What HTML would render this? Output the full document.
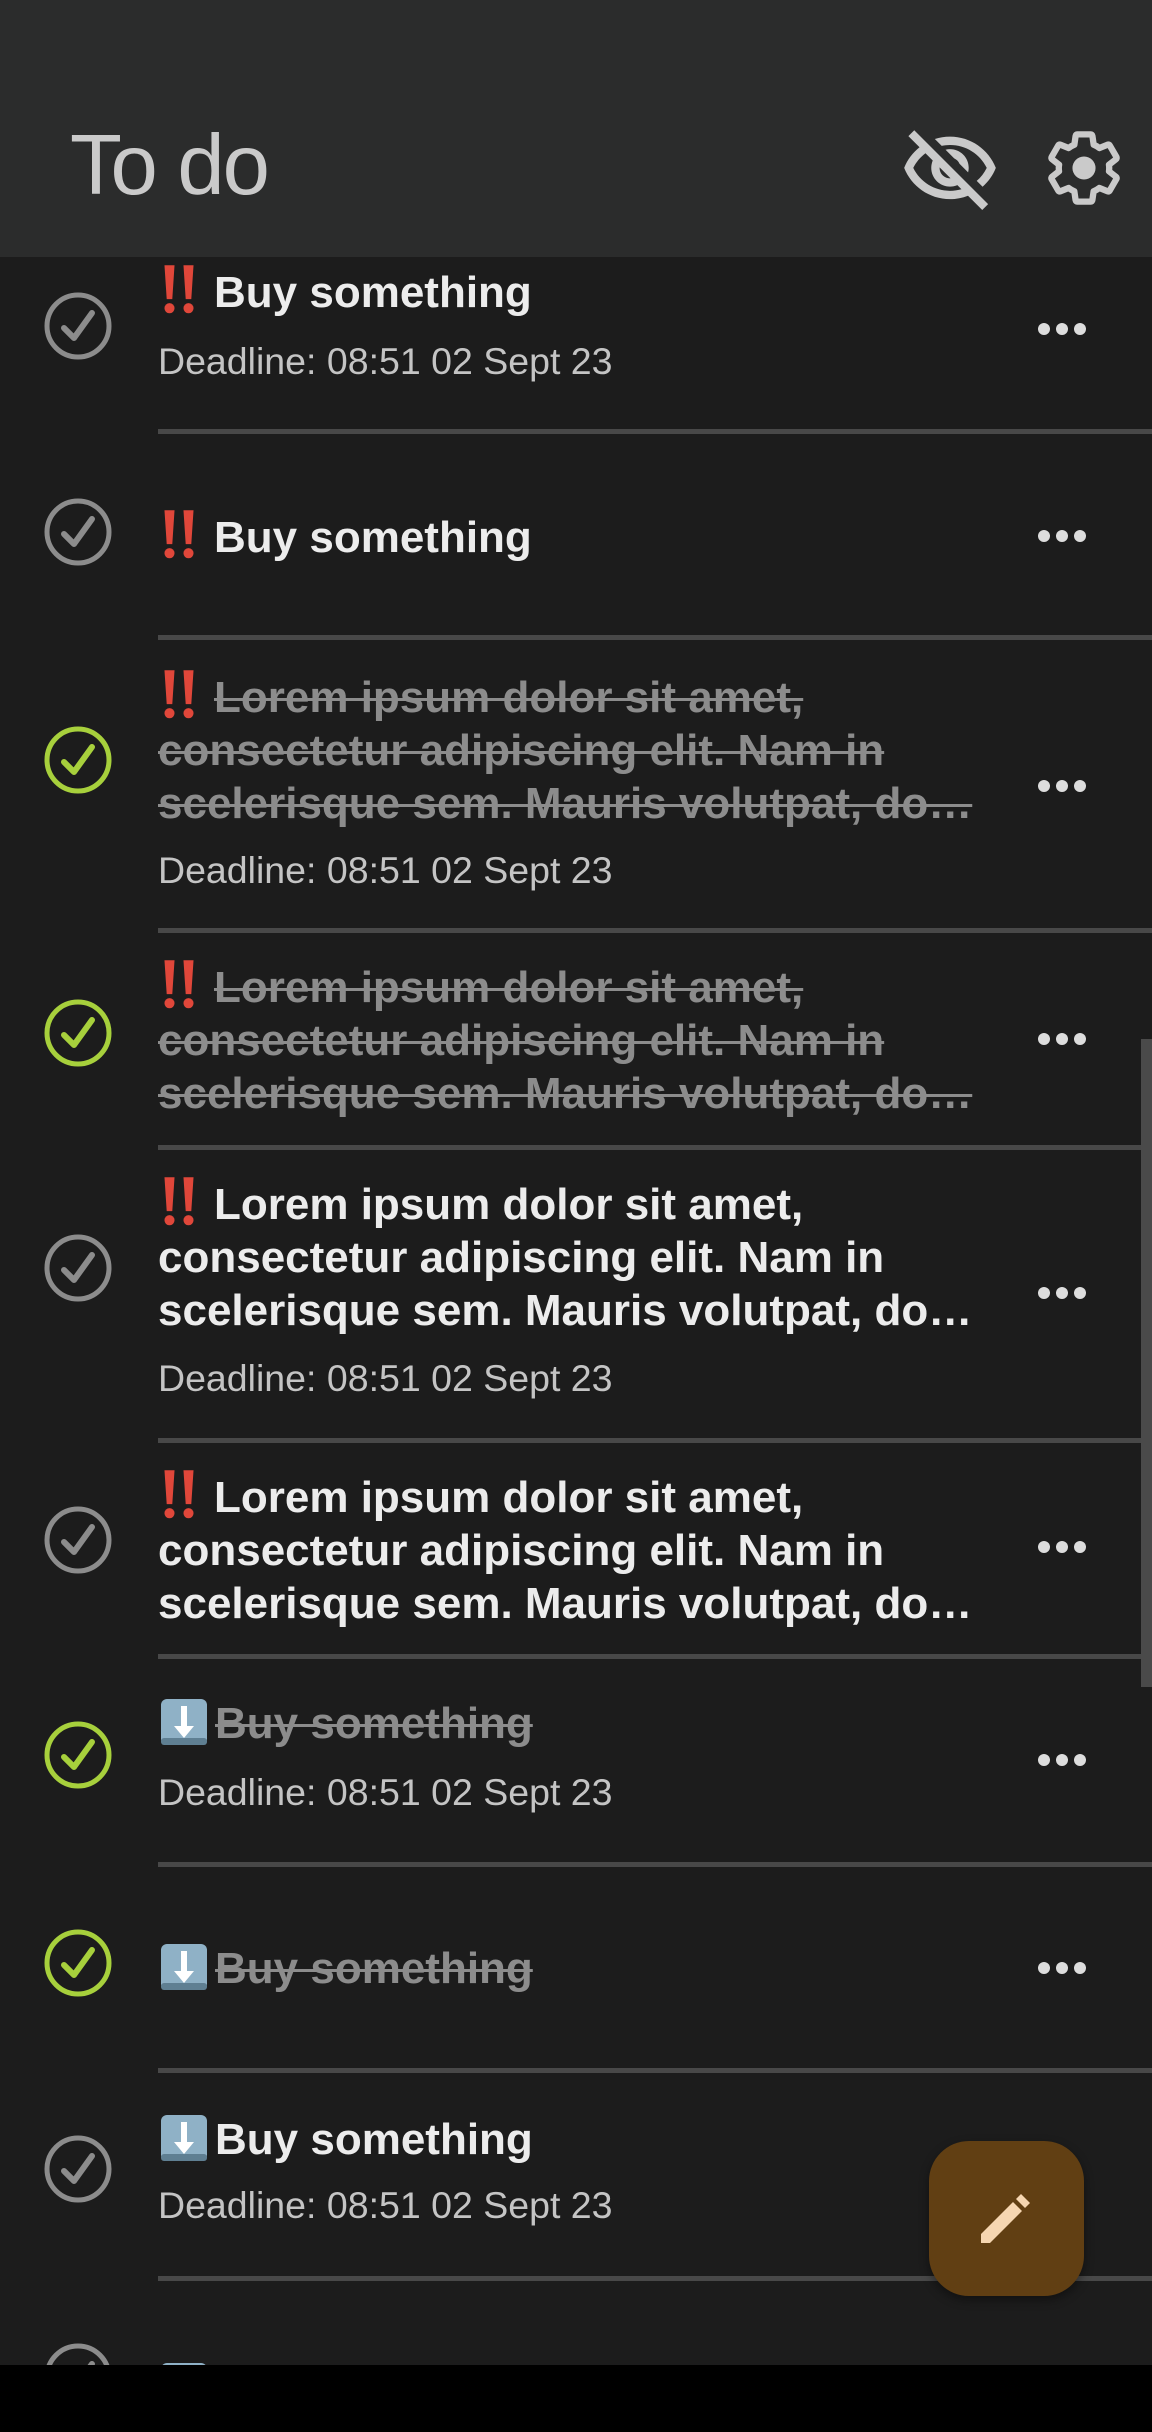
<!DOCTYPE html>
<html><head><meta charset="utf-8"><style>
*{margin:0;padding:0;box-sizing:border-box}
body{width:1152px;height:2432px;background:#1c1c1c;position:relative;overflow:hidden;font-family:"Liberation Sans",sans-serif}
.hdr{position:absolute;left:0;top:0;width:1152px;height:257px;background:#2b2c2c}
.title{position:absolute;left:70px;top:118px;font-size:85px;color:#cacaca;letter-spacing:-2px;line-height:96px}
.t{position:absolute;left:158px;font-size:44px;font-weight:bold;color:#ececec;line-height:53px;white-space:nowrap}
.s{color:#8c8c8c;text-decoration:line-through;text-decoration-thickness:3px}
.d{position:absolute;left:158px;font-size:37.5px;color:#c4c4c4;line-height:40px;white-space:nowrap}
.sep{position:absolute;left:158px;right:0;height:5px;background:#484848}
.chk{position:absolute;left:43px;width:70px;height:70px}
.dots{position:absolute;left:1036px;width:52px;height:14px}
.em{display:inline-block;vertical-align:2px;margin:-10px 16px -10px 2px}
.dn{display:inline-block;vertical-align:-8px;margin-right:7px;margin-left:2px}
</style></head><body>
<div class="hdr"></div>
<div class="title">To do</div>
<svg style="position:absolute;left:900px;top:120px" width="100" height="100" viewBox="0 0 24 24"><path fill="#cacaca" d="M12 6c3.79 0 7.17 2.13 8.82 5.5-.59 1.22-1.42 2.27-2.41 3.12l1.410 1.41c1.39-1.23 2.49-2.77 3.18-4.53C21.27 7.11 17 4 12 4c-1.270 0-2.49.2-3.64.57l1.65 1.65C10.66 6.09 11.32 6 12 6zm-1.07 1.14L13 9.21c.57.25 1.03.71 1.28 1.28l2.07 2.07c.08-.34.14-.7.14-1.07C16.5 9.01 14.48 7 12 7c-.37 0-.72.05-1.07.14zM2.01 3.87l2.68 2.68C3.06 7.830 1.78 9.52 1 11.5 2.73 15.89 7 19 12 19c1.52 0 2.98-.29 4.32-.82l3.42 3.42 1.41-1.41L3.42 2.45 2.01 3.87zm7.5 7.5l2.61 2.61c-.04.01-.08.02-.12.02-1.38 0-2.5-1.12-2.5-2.5 0-.05.01-.08.01-.13zm-3.4-3.4l1.75 1.75c-.23.55-.36 1.15-.36 1.78 0 2.48 2.02 4.5 4.5 4.5.63 0 1.23-.13 1.77-.36l.98.98c-.88.24-1.8.38-2.75.38-3.790 0-7.17-2.13-8.82-5.5.7-1.43 1.72-2.61 2.93-3.53z"/></svg>
<svg style="position:absolute;left:1042px;top:126px" width="84" height="84" viewBox="0 0 24 24"><path fill="none" stroke="#cacaca" stroke-width="1.8" stroke-linejoin="round" d="M19.14 12.94c.04-.3.06-.61.06-.94 0-.32-.02-.64-.07-.94l2.03-1.58c.18-.14.23-.41.12-.61l-1.92-3.32c-.12-.22-.37-.29-.59-.22l-2.39.96c-.5-.38-1.030-.7-1.62-.94l-.36-2.54c-.04-.24-.24-.41-.48-.41h-3.84c-.24 0-.43.17-.47.41l-.36 2.54c-.59.24-1.13.57-1.62.94l-2.39-.96c-.22-.08-.47 0-.59.22L2.74 8.87c-.12.21-.08.47.12.61l2.03 1.58c-.05.3-.09.63-.09.94s.02.64.07.94l-2.03 1.58c-.18.14-.23.41-.12.61l1.92 3.32c.12.22.37.29.59.22l2.39-.96c.5.38 1.03.7 1.62.94l.36 2.54c.05.24.24.41.48.41h3.84c.24 0 .44-.17.47-.41l.36-2.540c.59-.24 1.13-.56 1.62-.94l2.39.96c.22.08.47 0 .59-.22l1.920-3.32c.12-.22.07-.47-.12-.61l-2.01-1.58z"/><circle cx="12" cy="12" r="3.3" fill="#cacaca"/></svg>

<svg width="0" height="0" style="position:absolute"><defs>
<g id="cg"><circle cx="35" cy="35" r="31" fill="none" stroke="#8c8c8c" stroke-width="5"/><path d="M21 37 L31 47 L49 22" fill="none" stroke="#8c8c8c" stroke-width="6" stroke-linecap="round" stroke-linejoin="round"/></g>
<g id="cgr"><circle cx="35" cy="35" r="31" fill="none" stroke="#a7d03c" stroke-width="5"/><path d="M21 37 L31 47 L49 22" fill="none" stroke="#a7d03c" stroke-width="6" stroke-linecap="round" stroke-linejoin="round"/></g>
<g id="dt"><circle cx="8" cy="7" r="6" fill="#dddddd"/><circle cx="26" cy="7" r="6" fill="#dddddd"/><circle cx="44" cy="7" r="6" fill="#dddddd"/></g>
<g id="bang"><path d="M4 2 h9 l-2 30 h-5z M21 2 h9 l-2 30 h-5z" fill="#e0473a"/><circle cx="8.5" cy="40" r="4.5" fill="#e0473a"/><circle cx="25.5" cy="40" r="4.5" fill="#e0473a"/></g>
<g id="down"><rect x="1" y="1" width="46" height="46" rx="6" fill="#8fb1c6"/><rect x="1" y="40" width="46" height="7" rx="3" fill="#5f7f92"/><path d="M21 8 h6 v20 h7 l-10 12 -10 -12 h7z" fill="#fff"/></g>
</defs></svg>

<!-- Row1 -->
<svg class="chk" style="top:291px" viewBox="0 0 70 70"><use href="#cg"/></svg>
<div class="t" style="top:266px"><svg class="em" width="38" height="52" viewBox="0 0 34 46" preserveAspectRatio="none"><use href="#bang"/></svg>Buy something</div>
<div class="d" style="top:341px">Deadline: 08:51 02 Sept 23</div>
<svg class="dots" style="top:322px"><use href="#dt"/></svg>
<div class="sep" style="top:429px"></div>

<!-- Row2 -->
<svg class="chk" style="top:497px" viewBox="0 0 70 70"><use href="#cg"/></svg>
<div class="t" style="top:511px"><svg class="em" width="38" height="52" viewBox="0 0 34 46" preserveAspectRatio="none"><use href="#bang"/></svg>Buy something</div>
<svg class="dots" style="top:529px"><use href="#dt"/></svg>
<div class="sep" style="top:635px"></div>

<!-- Row3 -->
<svg class="chk" style="top:725px" viewBox="0 0 70 70"><use href="#cgr"/></svg>
<div class="t" style="top:671px"><svg class="em" width="38" height="52" viewBox="0 0 34 46" preserveAspectRatio="none"><use href="#bang"/></svg><span class="s">Lorem ipsum dolor sit amet,</span></div>
<div class="t s" style="top:724px">consectetur adipiscing elit. Nam in</div>
<div class="t s" style="top:777px">scelerisque sem. Mauris volutpat, do…</div>
<div class="d" style="top:850px">Deadline: 08:51 02 Sept 23</div>
<svg class="dots" style="top:779px"><use href="#dt"/></svg>
<div class="sep" style="top:928px"></div>

<!-- Row4 -->
<svg class="chk" style="top:998px" viewBox="0 0 70 70"><use href="#cgr"/></svg>
<div class="t" style="top:961px"><svg class="em" width="38" height="52" viewBox="0 0 34 46" preserveAspectRatio="none"><use href="#bang"/></svg><span class="s">Lorem ipsum dolor sit amet,</span></div>
<div class="t s" style="top:1014px">consectetur adipiscing elit. Nam in</div>
<div class="t s" style="top:1067px">scelerisque sem. Mauris volutpat, do…</div>
<svg class="dots" style="top:1032px"><use href="#dt"/></svg>
<div class="sep" style="top:1145px"></div>

<!-- Row5 -->
<svg class="chk" style="top:1233px" viewBox="0 0 70 70"><use href="#cg"/></svg>
<div class="t" style="top:1178px"><svg class="em" width="38" height="52" viewBox="0 0 34 46" preserveAspectRatio="none"><use href="#bang"/></svg>Lorem ipsum dolor sit amet,</div>
<div class="t" style="top:1231px">consectetur adipiscing elit. Nam in</div>
<div class="t" style="top:1284px">scelerisque sem. Mauris volutpat, do…</div>
<div class="d" style="top:1358px">Deadline: 08:51 02 Sept 23</div>
<svg class="dots" style="top:1286px"><use href="#dt"/></svg>
<div class="sep" style="top:1438px"></div>

<!-- Row6 -->
<svg class="chk" style="top:1505px" viewBox="0 0 70 70"><use href="#cg"/></svg>
<div class="t" style="top:1471px"><svg class="em" width="38" height="52" viewBox="0 0 34 46" preserveAspectRatio="none"><use href="#bang"/></svg>Lorem ipsum dolor sit amet,</div>
<div class="t" style="top:1524px">consectetur adipiscing elit. Nam in</div>
<div class="t" style="top:1577px">scelerisque sem. Mauris volutpat, do…</div>
<svg class="dots" style="top:1540px"><use href="#dt"/></svg>
<div class="sep" style="top:1654px"></div>

<!-- Row7 -->
<svg class="chk" style="top:1720px" viewBox="0 0 70 70"><use href="#cgr"/></svg>
<div class="t" style="top:1697px"><svg class="dn" width="48" height="48" viewBox="0 0 48 48"><use href="#down"/></svg><span class="s">Buy something</span></div>
<div class="d" style="top:1772px">Deadline: 08:51 02 Sept 23</div>
<svg class="dots" style="top:1753px"><use href="#dt"/></svg>
<div class="sep" style="top:1862px"></div>

<!-- Row8 -->
<svg class="chk" style="top:1928px" viewBox="0 0 70 70"><use href="#cgr"/></svg>
<div class="t" style="top:1942px"><svg class="dn" width="48" height="48" viewBox="0 0 48 48"><use href="#down"/></svg><span class="s">Buy something</span></div>
<svg class="dots" style="top:1961px"><use href="#dt"/></svg>
<div class="sep" style="top:2068px"></div>

<!-- Row9 -->
<svg class="chk" style="top:2134px" viewBox="0 0 70 70"><use href="#cg"/></svg>
<div class="t" style="top:2113px"><svg class="dn" width="48" height="48" viewBox="0 0 48 48"><use href="#down"/></svg>Buy something</div>
<div class="d" style="top:2185px">Deadline: 08:51 02 Sept 23</div>
<div class="sep" style="top:2276px"></div>

<!-- Row10 partial -->
<svg class="chk" style="top:2342px" viewBox="0 0 70 70"><use href="#cg"/></svg>
<svg style="position:absolute;left:160px;top:2362px" width="48" height="48" viewBox="0 0 48 48"><use href="#down"/></svg>

<!-- scrollbar -->
<div style="position:absolute;left:1141px;top:1039px;width:11px;height:648px;background:#4a4a4a"></div>

<!-- FAB -->
<div style="position:absolute;left:929px;top:2141px;width:155px;height:155px;border-radius:40px;background:#613f13;box-shadow:0 4px 10px rgba(0,0,0,.4)"></div>
<svg style="position:absolute;left:970px;top:2185px" width="70" height="70" viewBox="0 0 70 70"><path d="M11 58 L11 49 L43 17 L52 26 L20 58 Z" fill="#f6d6b1"/><path d="M46 14 L51 9 L60 18 L55 23 Z" fill="#f6d6b1"/></svg>

<!-- nav bar -->
<div style="position:absolute;left:0;top:2365px;width:1152px;height:67px;background:#000"></div>
</body></html>
